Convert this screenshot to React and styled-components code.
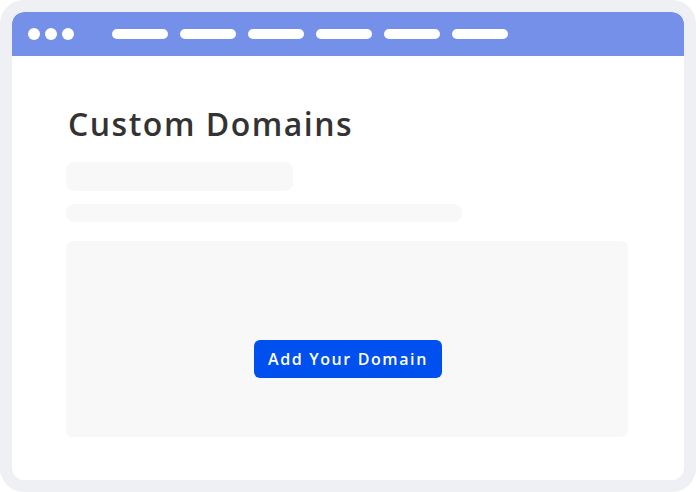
import React from "react";
import styled, { createGlobalStyle } from "styled-components";

const Global = createGlobalStyle`
  html, body { margin: 0; padding: 0; background: #ffffff; }
  * { box-sizing: border-box; }
`;

function App() {
  return (
    <>
      <Global />
      <Frame>
        <TopBar>
          <Dots>
            <Dot />
            <Dot />
            <Dot />
          </Dots>
          <Tabs>
            {[0, 1, 2, 3, 4, 5].map((i) => (
              <Tab key={i} />
            ))}
          </Tabs>
        </TopBar>
        <Content>
          <Title>Custom Domains</Title>
          <Skeleton $w={227} $h={29} $mt={18} />
          <Skeleton $w={396} $h={18} $mt={13} />
          <Panel>
            <AddButton>Add Your Domain</AddButton>
          </Panel>
        </Content>
      </Frame>
    </>
  );
}

const Frame = styled.div`
  width: 696px;
  height: 492px;
  border: 12px solid #eef0f4;
  border-radius: 24px;
  background: #ffffff;
  overflow: hidden;
  display: flex;
  flex-direction: column;
`;

const TopBar = styled.div`
  height: 44px;
  flex-shrink: 0;
  background: #7490e8;
  display: flex;
  align-items: center;
  padding-left: 16px;
  border-radius: 12px 12px 0 0;
`;

const Dots = styled.div`
  display: flex;
  gap: 5px;
`;

const Dot = styled.span`
  width: 12px;
  height: 12px;
  border-radius: 50%;
  background: #ffffff;
`;

const Tabs = styled.div`
  display: flex;
  gap: 12px;
  margin-left: 38px;
`;

const Tab = styled.span`
  width: 56px;
  height: 10px;
  border-radius: 5px;
  background: #ffffff;
`;

const Content = styled.div`
  padding: 48px 0 0 54px;
  display: flex;
  flex-direction: column;
`;

const Title = styled.h1`
  margin: 0 0 0 2px;
  font-family: "Open Sans", sans-serif;
  font-weight: 600;
  font-size: 32px;
  line-height: 40px;
  color: #333333;
  letter-spacing: 1.5px;
`;

const Skeleton = styled.div`
  width: ${(p) => p.$w}px;
  height: ${(p) => p.$h}px;
  margin-top: ${(p) => p.$mt}px;
  border-radius: 8px;
  background: #f8f8f8;
`;

const Panel = styled.div`
  width: 562px;
  height: 196px;
  margin-top: 19px;
  border-radius: 6px;
  background: #f8f8f8;
  display: flex;
  justify-content: center;
  padding-top: 99px;
  padding-left: 2px;
`;

const AddButton = styled.button`
  width: 188px;
  height: 38px;
  border: none;
  border-radius: 6px;
  background: #0050f0;
  color: #ffffff;
  font-family: "Open Sans", sans-serif;
  font-weight: 600;
  font-size: 16px;
  letter-spacing: 1.6px;
  cursor: pointer;
`;

export default App;
